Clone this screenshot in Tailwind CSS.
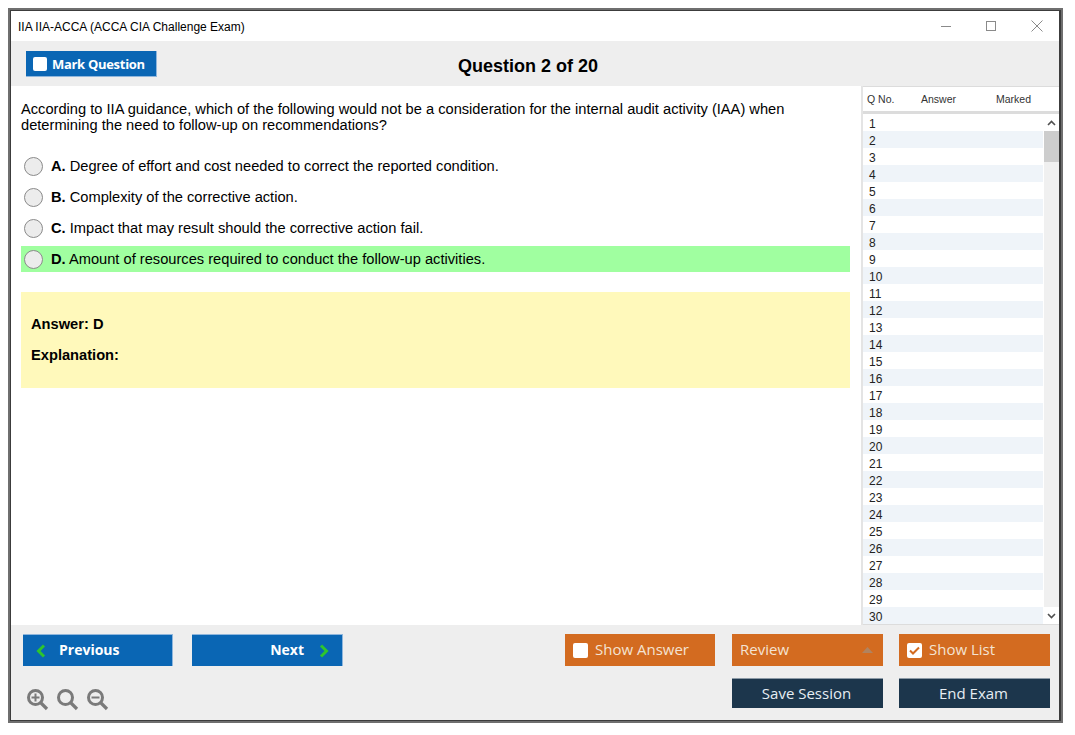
<!DOCTYPE html>
<html lang="en">
<head>
    <meta charset="UTF-8">
    <title>IIA IIA-ACCA (ACCA CIA Challenge Exam)</title>
    <script src="https://cdn.jsdelivr.net/npm/@tailwindcss/browser@4"></script>
</head>
<body class="bg-white overflow-hidden font-['Liberation_Sans',sans-serif] text-black">

<div class="mt-[8px] ml-[8px] w-[1055px] h-[715px] border-2 border-[#6f6f6f] flex">
<div class="flex-1 flex flex-col border border-r-2 border-[#3c3c3c] min-w-0">

    <!-- title bar -->
    <div class="h-[30px] flex items-center justify-between pl-[7px] bg-white">
        <span class="text-[12px] pt-[1px]">IIA IIA-ACCA (ACCA CIA Challenge Exam)</span>
        <div class="flex items-center text-[#8a8a8a]">
            <svg class="w-[12px] h-[12px] mr-[33px]" viewBox="0 0 12 12"><path d="M1 6.500h10" stroke="#8a8a8a" fill="none"/></svg>
            <svg class="w-[12px] h-[12px] mr-[34px]" viewBox="0 0 12 12"><rect x="1.500" y="1.500" width="9" height="9" stroke="#8a8a8a" fill="none"/></svg>
            <svg class="w-[12px] h-[12px] mr-[16px]" viewBox="0 0 12 12"><path d="M.5.5l11 11M11.500.5l-11 11" stroke="#8a8a8a" fill="none"/></svg>
        </div>
    </div>

    <!-- toolbar -->
    <div class="h-[45px] bg-[#eeeeee] relative flex items-center justify-center pr-[14px] pt-[5px]">
        <button class="absolute left-[15px] top-[10px] w-[131px] h-[26px] bg-[#0a66b4] border-b border-r border-[#8fb6dc] flex items-center pl-[7px] gap-[5px] text-white text-[13px] font-bold font-['Open_Sans',sans-serif]">
            <span class="w-[14px] h-[14px] rounded-[2px] bg-white"></span>
            <span class="tracking-[-0.3px] pt-[2px]">Mark Question</span>
        </button>
        <h1 class="text-[18px] font-bold">Question 2 of 20</h1>
    </div>

    <!-- middle -->
    <div class="h-[539px] flex bg-white">
        <div class="w-[850px] pl-[10px] pt-[15px]">
            <p class="text-[14.67px] leading-[16px] w-[800px]">According to IIA guidance, which of the following would not be a consideration for the internal audit activity (IAA) when determining the need to follow-up on recommendations?</p>

            <div class="mt-[20px] w-[829px] flex flex-col gap-[5px]">
                <div class="h-[26px] flex items-center pl-[3px] text-[14.67px]">
                    <span class="w-[19px] h-[19px] rounded-full bg-[#ececec] border border-[#8a8a8a] mr-[8px]"></span>
                    <span><b>A.</b> Degree of effort and cost needed to correct the reported condition.</span>
                </div>
                <div class="h-[26px] flex items-center pl-[3px] text-[14.67px]">
                    <span class="w-[19px] h-[19px] rounded-full bg-[#ececec] border border-[#8a8a8a] mr-[8px]"></span>
                    <span><b>B.</b> Complexity of the corrective action.</span>
                </div>
                <div class="h-[26px] flex items-center pl-[3px] text-[14.67px]">
                    <span class="w-[19px] h-[19px] rounded-full bg-[#ececec] border border-[#8a8a8a] mr-[8px]"></span>
                    <span><b>C.</b> Impact that may result should the corrective action fail.</span>
                </div>
                <div class="h-[26px] flex items-center pl-[3px] text-[14.67px] bg-[#a0ffa0]">
                    <span class="w-[19px] h-[19px] rounded-full bg-[#ececec] border border-[#8a8a8a] mr-[8px]"></span>
                    <span><b>D.</b> Amount of resources required to conduct the follow-up activities.</span>
                </div>
            </div>

            <div class="mt-[20px] w-[829px] h-[96px] bg-[#fff9bb] pl-[10px] pt-[24px] text-[14.67px] font-bold">
                <p class="leading-[16px]">Answer: D</p>
                <p class="leading-[16px] mt-[15px]">Explanation:</p>
            </div>
        </div>

        <!-- question list -->
        <div class="flex-1 flex flex-col border-l-2 border-[#e4e4e4] min-w-0">
            <div class="h-[28px] flex items-center border-t border-b-[3px] border-[#dcdcdc] text-[10.5px] text-[#333] pl-[4px] pt-[1px]">
                <span class="w-[54px]">Q No.</span>
                <span class="w-[75px]">Answer</span>
                <span>Marked</span>
            </div>
            <div class="flex-1 flex min-h-0 overflow-hidden border-b border-[#dcdcdc]">
                <div class="w-[180px] mr-[1px] text-[12px] text-[#222]">
                    <div class="h-[17px] leading-[20px] pl-[6px]">1</div>
                    <div class="h-[17px] leading-[20px] pl-[6px] bg-[#eff4f9]">2</div>
                    <div class="h-[17px] leading-[20px] pl-[6px]">3</div>
                    <div class="h-[17px] leading-[20px] pl-[6px] bg-[#eff4f9]">4</div>
                    <div class="h-[17px] leading-[20px] pl-[6px]">5</div>
                    <div class="h-[17px] leading-[20px] pl-[6px] bg-[#eff4f9]">6</div>
                    <div class="h-[17px] leading-[20px] pl-[6px]">7</div>
                    <div class="h-[17px] leading-[20px] pl-[6px] bg-[#eff4f9]">8</div>
                    <div class="h-[17px] leading-[20px] pl-[6px]">9</div>
                    <div class="h-[17px] leading-[20px] pl-[6px] bg-[#eff4f9]">10</div>
                    <div class="h-[17px] leading-[20px] pl-[6px]">11</div>
                    <div class="h-[17px] leading-[20px] pl-[6px] bg-[#eff4f9]">12</div>
                    <div class="h-[17px] leading-[20px] pl-[6px]">13</div>
                    <div class="h-[17px] leading-[20px] pl-[6px] bg-[#eff4f9]">14</div>
                    <div class="h-[17px] leading-[20px] pl-[6px]">15</div>
                    <div class="h-[17px] leading-[20px] pl-[6px] bg-[#eff4f9]">16</div>
                    <div class="h-[17px] leading-[20px] pl-[6px]">17</div>
                    <div class="h-[17px] leading-[20px] pl-[6px] bg-[#eff4f9]">18</div>
                    <div class="h-[17px] leading-[20px] pl-[6px]">19</div>
                    <div class="h-[17px] leading-[20px] pl-[6px] bg-[#eff4f9]">20</div>
                    <div class="h-[17px] leading-[20px] pl-[6px]">21</div>
                    <div class="h-[17px] leading-[20px] pl-[6px] bg-[#eff4f9]">22</div>
                    <div class="h-[17px] leading-[20px] pl-[6px]">23</div>
                    <div class="h-[17px] leading-[20px] pl-[6px] bg-[#eff4f9]">24</div>
                    <div class="h-[17px] leading-[20px] pl-[6px]">25</div>
                    <div class="h-[17px] leading-[20px] pl-[6px] bg-[#eff4f9]">26</div>
                    <div class="h-[17px] leading-[20px] pl-[6px]">27</div>
                    <div class="h-[17px] leading-[20px] pl-[6px] bg-[#eff4f9]">28</div>
                    <div class="h-[17px] leading-[20px] pl-[6px]">29</div>
                    <div class="h-[17px] leading-[20px] pl-[6px] bg-[#eff4f9]">30</div>
                </div>
                <!-- scrollbar -->
                <div class="flex-1 bg-[#f0f0f0] flex flex-col">
                    <div class="h-[17px] bg-white flex items-center justify-center">
                        <svg class="w-[9px] h-[6px]" viewBox="0 0 9 6"><path d="M1 5l3.500-3.500L8 5" stroke="#505050" stroke-width="1.600" fill="none"/></svg>
                    </div>
                    <div class="h-[31px] bg-[#cdcdcd]"></div>
                    <div class="flex-1"></div>
                    <div class="h-[17px] bg-white flex items-center justify-center">
                        <svg class="w-[9px] h-[6px]" viewBox="0 0 9 6"><path d="M1 1l3.500 3.500L8 1" stroke="#505050" stroke-width="1.600" fill="none"/></svg>
                    </div>
                </div>
            </div>
        </div>
    </div>

    <!-- bottom bar -->
    <div class="flex-1 bg-[#eeeeee] pl-[12px] pr-[9px] pt-[9px] font-['Open_Sans',sans-serif] text-[15px]">
        <div class="flex items-start">
            <button class="w-[150px] h-[32px] bg-[#0a66b4] border-r border-t border-[#8fb6dc] flex items-center pl-[12px] text-white text-[14px] font-bold">
                <svg class="w-[12px] h-[14px]" viewBox="0 0 12 14"><path d="M9 1.500L3.500 7 9 12.500" stroke="#2ec52e" stroke-width="3" fill="none"/></svg>
                <span class="ml-[12px] pb-[2px]">Previous</span>
            </button>
            <button class="ml-[19px] w-[151px] h-[32px] bg-[#0a66b4] border-r border-t border-[#8fb6dc] flex items-center justify-end pr-[12px] text-white text-[14px] font-bold">
                <span class="mr-[14px] pb-[2px]">Next</span>
                <svg class="w-[12px] h-[14px]" viewBox="0 0 12 14"><path d="M3 1.500L8.500 7 3 12.500" stroke="#2ec52e" stroke-width="3" fill="none"/></svg>
            </button>
            <button class="ml-[222px] w-[150px] h-[32px] bg-[#d36b20] flex items-center pl-[8px] text-[#f4e3d3]">
                <span class="w-[15px] h-[15px] rounded-[2px] bg-white"></span>
                <span class="ml-[7px] pb-[2px]">Show Answer</span>
            </button>
            <button class="ml-[17px] w-[151px] h-[32px] bg-[#d36b20] flex items-center justify-between pl-[8px] pr-[10px] text-[#f4e3d3]">
                <span class="pb-[2px]">Review</span>
                <svg class="w-[11px] h-[6px]" viewBox="0 0 11 6"><path d="M5.500 0L11 6H0z" fill="#b1835f"/></svg>
            </button>
            <button class="ml-[16px] w-[151px] h-[32px] bg-[#d36b20] flex items-center pl-[8px] text-[#f4e3d3]">
                <span class="w-[15px] h-[15px] rounded-[2px] bg-white flex items-center justify-center">
                    <svg class="w-[11px] h-[9px]" viewBox="0 0 11 9"><path d="M1 4.500L4 7.500 10 1.500" stroke="#d36b20" stroke-width="2" fill="none"/></svg>
                </span>
                <span class="ml-[7px] pb-[2px]">Show List</span>
            </button>
        </div>
        <div class="flex items-start mt-[12px]">
            <div class="flex items-center gap-[7px] mt-[10px] ml-[3px]">
                <svg class="w-[23px] h-[23px]" viewBox="0 0 23 23" fill="none" stroke="#7a7a7a"><circle cx="9.500" cy="9.500" r="7" stroke-width="3"/><path d="M15 15l6 6" stroke-width="3.200"/><path d="M5.500 9.500h8M9.500 5.500v8" stroke-width="2"/></svg>
                <svg class="w-[23px] h-[23px]" viewBox="0 0 23 23" fill="none" stroke="#7a7a7a"><circle cx="9.500" cy="9.500" r="7" stroke-width="3"/><path d="M15 15l6 6" stroke-width="3.200"/></svg>
                <svg class="w-[23px] h-[23px]" viewBox="0 0 23 23" fill="none" stroke="#7a7a7a"><circle cx="9.500" cy="9.500" r="7" stroke-width="3"/><path d="M15 15l6 6" stroke-width="3.200"/><path d="M5.500 9.500h8" stroke-width="2"/></svg>
            </div>
            <button class="ml-[623px] w-[151px] h-[30px] pr-[2px] bg-[#1c364c] text-[#e6edf3] border-t border-[#8c9aa6]">Save Session</button>
            <button class="ml-[16px] w-[151px] h-[30px] pr-[2px] bg-[#1c364c] text-[#e6edf3] border-t border-[#8c9aa6]">End Exam</button>
        </div>
    </div>
</div>
</div>

</body>
</html>
